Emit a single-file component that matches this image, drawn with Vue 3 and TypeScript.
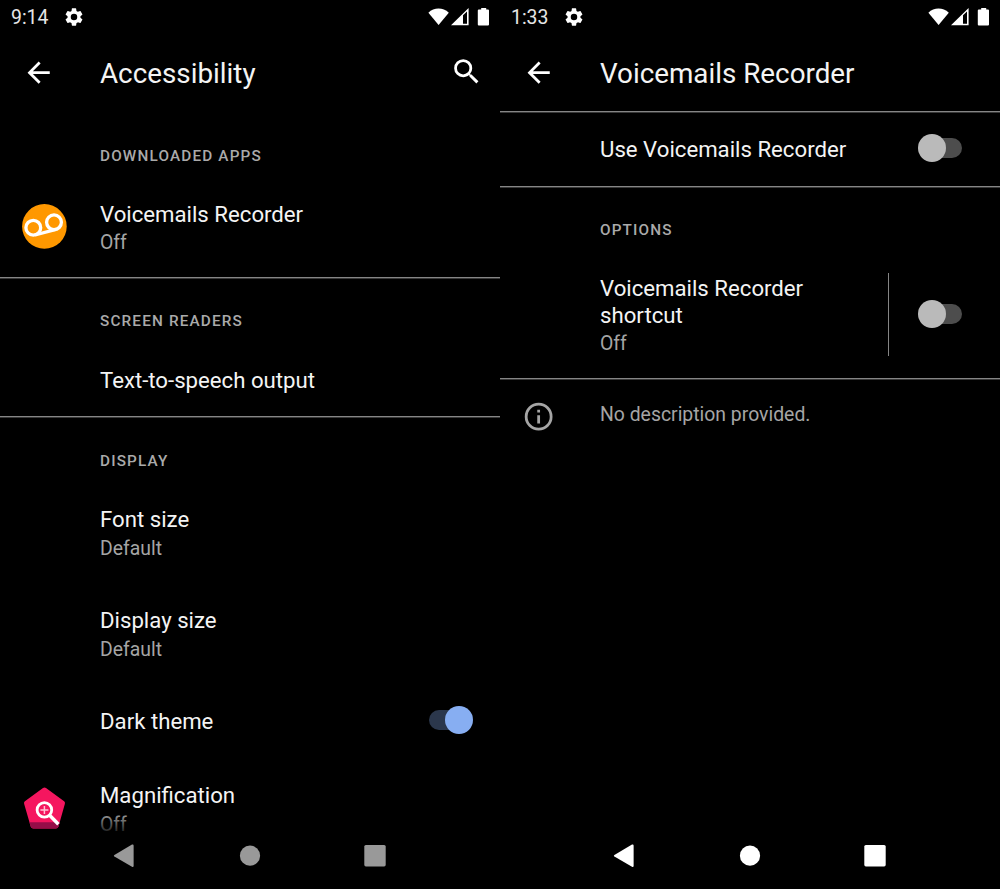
<script setup lang="ts">
interface Row { title: string; sub?: string; icon?: 'voicemail' | 'magnify'; on?: boolean }
interface Section { header: string; rows: Row[] }

const sections: Section[] = [
  { header: 'DOWNLOADED APPS', rows: [{ title: 'Voicemails Recorder', sub: 'Off', icon: 'voicemail' }] },
  { header: 'SCREEN READERS', rows: [{ title: 'Text-to-speech output' }] },
  {
    header: 'DISPLAY',
    rows: [
      { title: 'Font size', sub: 'Default' },
      { title: 'Display size', sub: 'Default' },
      { title: 'Dark theme', on: true },
      { title: 'Magnification', sub: 'Off', icon: 'magnify' },
    ],
  },
]
const screens = [
  { id: 'list', time: '9:14', title: 'Accessibility' },
  { id: 'detail', time: '1:33', title: 'Voicemails Recorder' },
]
</script>

<template>
  <main class="page">
    <section v-for="s in screens" :key="s.id" class="phone" :class="s.id">
      <div class="status">
        <span class="time">{{ s.time }}</span>
        <svg class="gear" viewBox="2 2 20 20"><path d="M19.14 12.94c.04-.3.06-.61.06-.94 0-.32-.02-.64-.07-.94l2.03-1.58a.49.49 0 0 0 .12-.61l-1.92-3.32a.49.49 0 0 0-.59-.22l-2.39.96c-.5-.38-1.03-.7-1.62-.94l-.36-2.54a.48.48 0 0 0-.48-.41h-3.84c-.24 0-.43.17-.47.41l-.36 2.54c-.59.24-1.13.57-1.62.94l-2.39-.96a.48.48 0 0 0-.59.22L2.74 8.87c-.12.21-.08.47.12.61l2.03 1.58c-.05.3-.09.63-.09.94s.02.64.07.94l-2.03 1.58a.49.49 0 0 0-.12.61l1.92 3.32c.12.22.37.29.59.22l2.39-.96c.5.38 1.03.7 1.62.94l.36 2.54c.05.24.24.41.48.41h3.84c.24 0 .44-.17.47-.41l.36-2.54c.59-.24 1.13-.56 1.62-.94l2.39.96c.22.08.47 0 .59-.22l1.92-3.32a.48.48 0 0 0-.12-.61zM12 15.6A3.6 3.6 0 1 1 12 8.4a3.6 3.6 0 0 1 0 7.2z" /></svg>
        <svg class="signals" viewBox="0 0 64 20">
          <path d="M.4 4.8C6-.8 15-.8 20.8 4.8L10.6 17z" />
          <path fill-rule="evenodd" d="M23 17.2L40.6 0v17.2zM35 7.2v8.6h4V3.6z" />
          <path d="M50.8 1.4h2.4V0h5v1.4H60a1 1 0 0 1 1 1v14a1 1 0 0 1-1 1h-9.2a1 1 0 0 1-1-1v-14a1 1 0 0 1 1-1z" />
        </svg>
      </div>
      <header class="toolbar">
        <svg class="back" viewBox="0 0 24 24"><path d="M20 11H7.83l5.59-5.59L12 4l-8 8 8 8 1.41-1.41L7.83 13H20z" /></svg>
        <h1>{{ s.title }}</h1>
        <svg v-if="s.id === 'list'" class="search" viewBox="0 0 24 24"><path d="M15.5 14h-.79l-.28-.27A6.47 6.47 0 0 0 16 9.5 6.5 6.5 0 1 0 9.5 16c1.61 0 3.09-.59 4.23-1.57l.27.28v.79l5 4.99L20.49 19zM9.5 14a4.5 4.5 0 1 1 0-9 4.5 4.5 0 0 1 0 9z" /></svg>
      </header>

      <div v-if="s.id === 'list'" class="content">
        <div v-for="g in sections" :key="g.header" class="group">
          <h2>{{ g.header }}</h2>
          <div v-for="r in g.rows" :key="r.title" class="row" :class="{ tall: r.sub }">
            <div class="lead">
              <svg v-if="r.icon === 'voicemail'" class="app" viewBox="0 0 46 46">
                <circle cx="23.4" cy="23.4" r="22.3" fill="#ff9800" />
                <g fill="none" stroke="#fff" stroke-width="3.3">
                  <circle cx="12.3" cy="24.7" r="7.4" /><circle cx="33" cy="19.3" r="7.4" />
                  <path d="M14 32L35 26.4" />
                </g>
              </svg>
              <svg v-if="r.icon === 'magnify'" class="app" viewBox="0 0 46 46">
                <path d="M22 3q1.5-1 3 0l18.1 13.3q1.2 1 .8 2.4L37.5 41.4q-.7 2-2.6 2H12.3q-1.9 0-2.6-2L3.1 18.7q-.4-1.4.8-2.4z" fill="#f5165f" />
                <path d="M8.5 37.3h30.2l-1.2 4.1q-.7 2-2.6 2H12.3q-1.9 0-2.6-2z" fill="#960d48" />
                <g fill="none" stroke="#fff">
                  <circle cx="23.4" cy="24.9" r="7.3" stroke-width="2.8" />
                  <path d="M28.4 30l9 9.2" stroke-width="3.4" /><path d="M19.4 24.9h8M23.4 20.9v8" stroke-width="1.5" stroke="#ffc2d5" />
                </g>
              </svg>
            </div>
            <div class="copy"><p class="title">{{ r.title }}</p><p v-if="r.sub" class="sub">{{ r.sub }}</p></div>
            <span v-if="r.on" class="switch on"><i></i></span>
          </div>
        </div>
      </div>

      <div v-else class="content">
        <div class="row"><div class="lead"></div><div class="copy"><p class="title">Use Voicemails Recorder</p></div><span class="switch"><i></i></span></div>
        <div class="group">
          <h2>OPTIONS</h2>
          <div class="row shortcut">
            <div class="lead"></div>
            <div class="copy"><p class="title">Voicemails Recorder shortcut</p><p class="sub">Off</p></div>
            <div class="split"></div>
            <span class="switch"><i></i></span>
          </div>
        </div>
        <div class="info">
          <svg viewBox="0 0 24 24"><path d="M11 7h2v2h-2zm0 4h2v6h-2zm1-9a10 10 0 1 0 0 20 10 10 0 0 0 0-20zm0 18a8 8 0 1 1 0-16 8 8 0 0 1 0 16z" /></svg>
          <p>No description provided.</p>
        </div>
      </div>

      <nav class="nav">
        <svg viewBox="0 0 24 24"><path d="M1.4 10.9L19 .6q1.6-.6 1.6.8v20.6q0 1.4-1.6.8L1.4 12.5q-1.2-.8 0-1.6z" /></svg>
        <svg viewBox="0 0 24 24"><circle cx="12" cy="11.7" r="10.1" /></svg>
        <svg viewBox="0 0 24 24"><rect x="1.3" y="1" width="21.4" height="21.4" rx="1.6" /></svg>
      </nav>
    </section>
  </main>
</template>

<style>
body { background: #000; }
</style>

<style scoped>
* { box-sizing: border-box; }
h1, h2, p { margin: 0; font-weight: 400; }
svg { display: block; flex: none; fill: currentColor; }
.page { display: grid; grid-template-columns: 500px 500px; height: 889px; background: #000; color: #f4f4f4; font-family: Roboto, sans-serif; overflow: hidden; }
.phone { position: relative; display: flex; flex-direction: column; height: 889px; overflow: hidden; }
.status { flex: none; display: flex; align-items: center; height: 34px; padding: 0 8px 0 11px; color: #fff; }
.time { width: 54px; font-size: 19.4px; color: #e6e6e6; padding-top: 1px; }
.gear { width: 18px; height: 18px; }
.signals { width: 64px; height: 20px; margin-left: auto; margin-top: 2px; }
.toolbar { flex: none; display: flex; align-items: center; height: 77px; padding: 0 17px 0 22px; }
.back { width: 33.3px; height: 33.3px; margin-bottom: 0.4px; color: #fff; }
h1 { flex: 1; margin-left: 44.7px; font-size: 27.8px; line-height: 32px; padding-top: 2px; }
.search { width: 33.3px; height: 33.3px; margin-bottom: 2px; color: #fff; }
.content { flex: 1; display: flex; flex-direction: column; min-height: 0; }
.group + .group, .detail .content, .detail .group { border-top: 1px solid #858585; box-shadow: inset 0 1px #383838; }
h2 { height: 65px; padding: 34px 0 0 100px; font-size: 15.3px; line-height: 19px; font-weight: 500; letter-spacing: 1.16px; color: #aaa; }
.list .group:first-child h2 { height: 66px; padding-top: 36px; }
.list .group:last-child h2 { padding-top: 35px; }
.row { display: flex; align-items: center; height: 74px; padding-right: 27px; }
.row.tall { height: 101px; }
.list .group:first-child .row { height: 100px; }
.list .group:nth-child(2) .row { height: 73px; }
.list .group:nth-child(2) .copy { padding-top: 1.5px; }
.lead { width: 100px; flex: none; padding-left: 21px; }
.app { position: relative; z-index: 2; width: 46px; height: 46px; margin-bottom: 2px; }
.copy { flex: 1; }
.tall .copy { padding-top: 1px; }
.title { font-size: 22.2px; line-height: 26.5px; }
.sub { font-size: 19.4px; line-height: 23px; margin-top: 3px; color: #a5a5a5; }
.tall .sub { margin-top: 4px; }
.switch { position: relative; width: 44px; height: 28px; margin-bottom: 2px; display: flex; align-items: center; }
.switch::before { content: ''; width: 39px; height: 20px; margin-left: 5px; border-radius: 10px; background: #4d4d4d; }
.switch i { position: absolute; left: 0; top: 0; width: 28px; height: 28px; border-radius: 50%; background: #bababa; }
.switch.on::before { margin-left: 0; background: #2b374c; }
.switch.on i { left: 16px; background: #87aef2; }
.detail .row { padding-right: 38px; }
.detail .group { border-bottom: 1px solid #858585; }
.row.shortcut { height: 126px; }
.shortcut .copy { flex: 0 0 260px; }
.shortcut .title { line-height: 27px; }
.split { width: 1px; height: 83px; margin: 0 auto 2px 28px; background: #858585; }
.info { display: flex; padding: 21px 0 0 22px; color: #a5a5a5; box-shadow: inset 0 1px #383838; }
.info svg { width: 33.3px; height: 33.3px; }
.info p { margin-left: 44.7px; padding-top: 3px; font-size: 19.4px; line-height: 23px; }
.nav { position: absolute; left: 0; right: 0; bottom: 0; height: 76px; padding: 31px 113px 0; display: flex; justify-content: space-between; color: #fff; }
.nav svg { width: 24px; height: 24px; }
.list .nav { color: #999; background: linear-gradient(transparent, rgba(0, 0, 0, .75) 18px, #000 19px); }
</style>
